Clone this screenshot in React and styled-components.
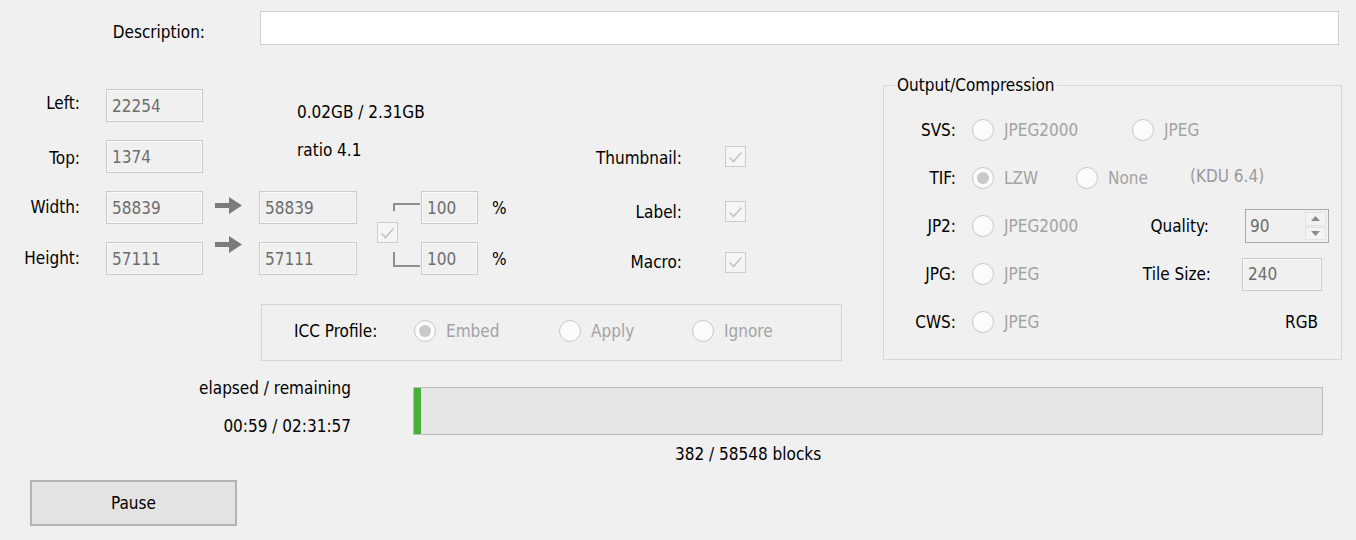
import React from "react";
import styled, { createGlobalStyle } from "styled-components";

const GlobalStyle = createGlobalStyle`
  html, body {
    margin: 0;
    padding: 0;
    background: #f0f0f0;
  }

  body {
    font-family: "DejaVu Sans Condensed", "DejaVu Sans", sans-serif;
    font-stretch: condensed;
    font-size: 17px;
    color: #000;
  }
`;

const Dialog = styled.div`
  width: 1356px;
  height: 540px;
  overflow: hidden;
  display: flex;
  flex-direction: column;
`;

const DescRow = styled.div`
  display: flex;
  align-items: center;
  margin-top: 11px;
  height: 34px;
`;

const DescLabel = styled.div`
  width: 205px;
  text-align: right;
  padding-top: 8px;
`;

const DescInput = styled.div`
  margin-left: 55px;
  width: 1079px;
  height: 34px;
  box-sizing: border-box;
  background: #fff;
  border: 1px solid #d0d0d0;
`;

const Main = styled.div`
  display: flex;
  align-items: flex-start;
  margin-top: 30px;
`;

const LeftPane = styled.div`
  width: 842px;
  padding-top: 14px;
`;

const SizeGrid = styled.div`
  display: grid;
  grid-template-columns: 106px 97px 56px 98px 64px 57px 52px 170px 60px;
  grid-template-rows: repeat(4, 33px);
  row-gap: 18px;
`;

const FieldLabel = styled.div`
  grid-column: 1;
  grid-row: ${(p) => p.$row};
  align-self: center;
  text-align: right;
  padding-right: 26px;
  margin-top: ${(p) => p.$shift || 0}px;
`;

const ValueBox = styled.div`
  grid-column: ${(p) => p.$col};
  grid-row: ${(p) => p.$row};
  box-sizing: border-box;
  height: 33px;
  display: flex;
  align-items: center;
  padding-left: 5px;
  color: #6d6d6d;
  border: 1px solid #cbcbcb;
  box-shadow: inset 0 0 0 1px #f9f9f9;
`;

const ArrowStack = styled.div`
  grid-column: 3;
  grid-row: 3 / span 2;
  display: flex;
  flex-direction: column;
  gap: 22px;
  padding: 6px 0 0 12px;
`;

const Stats = styled.div`
  grid-column: 4 / span 5;
  grid-row: 1 / span 2;
  display: flex;
  flex-direction: column;
  gap: 16px;
  padding: 12px 0 0 38px;
  line-height: 22px;
`;

const LinkCell = styled.div`
  grid-column: 5;
  grid-row: 3 / span 2;
  display: flex;
  flex-direction: column;
  padding-top: 12px;
`;

const Bracket = styled.div`
  margin-left: 36px;
  width: 27px;
  height: ${(p) => p.$h}px;
  margin-top: ${(p) => p.$mt}px;
  box-sizing: border-box;
  border-left: 2px solid #8f8f8f;
  ${(p) => (p.$bottom ? "border-bottom" : "border-top")}: 2px solid #8f8f8f;
`;

const LinkCheck = styled.div`
  margin: 11px 0 0 20px;
`;

const Percent = styled.div`
  grid-column: 7;
  grid-row: ${(p) => p.$row};
  align-self: center;
  padding-left: 14px;
`;

const CheckLabel = styled.div`
  grid-column: 8;
  grid-row: ${(p) => p.$row};
  align-self: center;
  text-align: right;
  padding-right: 18px;
  margin-top: ${(p) => p.$shift || 0}px;
`;

const CheckCell = styled.div`
  grid-column: 9;
  grid-row: ${(p) => p.$row};
  align-self: center;
  padding-left: 25px;
  margin-top: ${(p) => p.$shift || 0}px;
`;

const CheckBox = styled.div`
  width: 21px;
  height: 21px;
  box-sizing: border-box;
  border: 1px solid #cccccc;
  background: #f5f5f5;
  display: flex;
  align-items: center;
  justify-content: center;
`;

const IccBox = styled.div`
  margin: 29px 0 0 261px;
  width: 581px;
  height: 57px;
  box-sizing: border-box;
  border: 1px solid #d6d6d6;
  display: flex;
  align-items: center;
  padding: 0 0 3px 32px;
`;

const IccLabel = styled.div`
  width: 120px;
`;

const Option = styled.div`
  display: flex;
  align-items: center;
  gap: 10px;
  width: ${(p) => p.$w}px;
  margin-left: ${(p) => p.$ml || 0}px;
  color: #a3a3a3;
  white-space: nowrap;
`;

const RadioDot = styled.span`
  width: 22px;
  height: 22px;
  flex: none;
  box-sizing: border-box;
  border-radius: 50%;
  border: 1px solid #c8c8c8;
  background: #fbfbfb;
  display: flex;
  align-items: center;
  justify-content: center;

  &::after {
    content: "";
    width: 12px;
    height: 12px;
    border-radius: 50%;
    background: ${(p) => (p.$on ? "#c9c9c9" : "transparent")};
  }
`;

const Group = styled.fieldset`
  margin: 0 0 0 41px;
  padding: 11px 0 13px 0;
  width: 459px;
  box-sizing: border-box;
  border: 1px solid #d7d7d7;
  min-width: 0;
`;

const Legend = styled.legend`
  margin-left: 11px;
  padding: 0 2px;
  line-height: 20px;
`;

const OptRow = styled.div`
  display: flex;
  align-items: center;
  height: 48px;
`;

const RowLabel = styled.div`
  width: 72px;
  margin-right: 16px;
  text-align: right;
`;

const SideLabel = styled.div`
  width: ${(p) => p.$w}px;
  margin-right: ${(p) => p.$mr || 0}px;
  text-align: right;
`;

const Note = styled.div`
  color: #999;
  margin-top: -5px;
`;

const TileBox = styled.div`
  width: 80px;
  height: 33px;
  box-sizing: border-box;
  border: 1px solid #cbcbcb;
  box-shadow: inset 0 0 0 1px #f9f9f9;
  color: #6d6d6d;
  display: flex;
  align-items: center;
  padding-left: 5px;
`;

const Spin = styled.div`
  width: 84px;
  height: 34px;
  box-sizing: border-box;
  border: 1px solid #a9a9a9;
  display: flex;
  align-items: stretch;
  color: #6d6d6d;
`;

const SpinValue = styled.div`
  flex: 1;
  display: flex;
  align-items: center;
  padding-left: 4px;
`;

const SpinButtons = styled.div`
  width: 21px;
  display: flex;
  flex-direction: column;
  padding: 2px 2px 2px 0;
  gap: 1px;
`;

const SpinHalf = styled.div`
  flex: 1;
  background: #f3f3f3;
  border: 1px solid #e2e2e2;
  display: flex;
  align-items: center;
  justify-content: center;
`;

const ProgressRow = styled.div`
  display: flex;
  margin-top: 16px;
`;

const TimeCol = styled.div`
  width: 351px;
  display: flex;
  flex-direction: column;
  gap: 16px;
  text-align: right;
  line-height: 22px;
`;

const BarCol = styled.div`
  margin-left: 62px;
  padding-top: 10px;
`;

const Bar = styled.div`
  width: 910px;
  height: 48px;
  box-sizing: border-box;
  border: 1px solid #bcbcbc;
  background: #e6e6e6;
  display: flex;
`;

const Fill = styled.div`
  background: #47b03a;
`;

const BlocksText = styled.div`
  margin-top: 8px;
  padding-left: 262px;
  line-height: 22px;
`;

const PauseButton = styled.div`
  margin: 15px 0 0 30px;
  width: 207px;
  height: 46px;
  box-sizing: border-box;
  border: 2px solid #b3b3b3;
  background: #e3e3e3;
  display: flex;
  align-items: center;
  justify-content: center;
`;

const Arrow = () => (
  <svg width="27" height="17" viewBox="0 0 27 17">
    <path d="M0 6h14V0l13 8.5L14 17v-6H0z" fill="#7b7b7b" />
  </svg>
);

const Check = () => (
  <CheckBox>
    <svg width="15" height="12" viewBox="0 0 15 12">
      <path d="M1.5 6.5l4 4 8-9" fill="none" stroke="#c4c4c4" strokeWidth="1.6" />
    </svg>
  </CheckBox>
);

const Radio = ({ label, on, w, ml }) => (
  <Option $w={w} $ml={ml}>
    <RadioDot $on={on} />
    {label}
  </Option>
);

const Tri = ({ up }) => (
  <svg width="9" height="5" viewBox="0 0 9 5">
    <path d={up ? "M0 5L4.5 0 9 5z" : "M0 0h9L4.5 5z"} fill="#8a8a8a" />
  </svg>
);

export default function App() {
  const done = 382;
  const total = 58548;
  const fillWidth = Math.max(7, Math.round((done / total) * 908));

  return (
    <>
      <GlobalStyle />
      <Dialog>
        <DescRow>
          <DescLabel>Description:</DescLabel>
          <DescInput />
        </DescRow>

        <Main>
          <LeftPane>
            <SizeGrid>
              <FieldLabel $row={1} $shift={-6}>Left:</FieldLabel>
              <ValueBox $col={2} $row={1}>22254</ValueBox>
              <FieldLabel $row={2} $shift={2}>Top:</FieldLabel>
              <ValueBox $col={2} $row={2}>1374</ValueBox>
              <FieldLabel $row={3} $shift={-2}>Width:</FieldLabel>
              <ValueBox $col={2} $row={3}>58839</ValueBox>
              <FieldLabel $row={4} $shift={-2}>Height:</FieldLabel>
              <ValueBox $col={2} $row={4}>57111</ValueBox>

              <Stats>
                <div>0.02GB / 2.31GB</div>
                <div>ratio 4.1</div>
              </Stats>

              <ArrowStack>
                <Arrow />
                <Arrow />
              </ArrowStack>

              <ValueBox $col={4} $row={3}>58839</ValueBox>
              <ValueBox $col={4} $row={4}>57111</ValueBox>

              <LinkCell>
                <Bracket $h={8} $mt={0} />
                <LinkCheck>
                  <Check />
                </LinkCheck>
                <Bracket $h={15} $mt={9} $bottom />
              </LinkCell>

              <ValueBox $col={6} $row={3}>100</ValueBox>
              <ValueBox $col={6} $row={4}>100</ValueBox>
              <Percent $row={3}>%</Percent>
              <Percent $row={4}>%</Percent>

              <CheckLabel $row={2} $shift={2}>Thumbnail:</CheckLabel>
              <CheckCell $row={2}>
                <Check />
              </CheckCell>
              <CheckLabel $row={3} $shift={8}>Label:</CheckLabel>
              <CheckCell $row={3} $shift={8}>
                <Check />
              </CheckCell>
              <CheckLabel $row={4} $shift={7}>Macro:</CheckLabel>
              <CheckCell $row={4} $shift={7}>
                <Check />
              </CheckCell>
            </SizeGrid>

            <IccBox>
              <IccLabel>ICC Profile:</IccLabel>
              <Radio label="Embed" on w={145} />
              <Radio label="Apply" w={133} />
              <Radio label="Ignore" w={100} />
            </IccBox>
          </LeftPane>

          <Group>
            <Legend>Output/Compression</Legend>
            <OptRow>
              <RowLabel>SVS:</RowLabel>
              <Radio label="JPEG2000" w={160} />
              <Radio label="JPEG" w={100} />
            </OptRow>
            <OptRow>
              <RowLabel>TIF:</RowLabel>
              <Radio label="LZW" on w={104} />
              <Radio label="None" w={114} />
              <Note>(KDU 6.4)</Note>
            </OptRow>
            <OptRow>
              <RowLabel>JP2:</RowLabel>
              <Radio label="JPEG2000" w={160} />
              <SideLabel $w={77} $mr={36}>
                Quality:
              </SideLabel>
              <Spin>
                <SpinValue>90</SpinValue>
                <SpinButtons>
                  <SpinHalf>
                    <Tri up />
                  </SpinHalf>
                  <SpinHalf>
                    <Tri />
                  </SpinHalf>
                </SpinButtons>
              </Spin>
            </OptRow>
            <OptRow>
              <RowLabel>JPG:</RowLabel>
              <Radio label="JPEG" w={160} />
              <SideLabel $w={79} $mr={31}>
                Tile Size:
              </SideLabel>
              <TileBox>240</TileBox>
            </OptRow>
            <OptRow>
              <RowLabel>CWS:</RowLabel>
              <Radio label="JPEG" w={160} />
              <SideLabel $w={186}>RGB</SideLabel>
            </OptRow>
          </Group>
        </Main>

        <ProgressRow>
          <TimeCol>
            <div>elapsed / remaining</div>
            <div>00:59 / 02:31:57</div>
          </TimeCol>
          <BarCol>
            <Bar>
              <Fill style={{ width: fillWidth }} />
            </Bar>
            <BlocksText>
              {done} / {total} blocks
            </BlocksText>
          </BarCol>
        </ProgressRow>

        <PauseButton>Pause</PauseButton>
      </Dialog>
    </>
  );
}
